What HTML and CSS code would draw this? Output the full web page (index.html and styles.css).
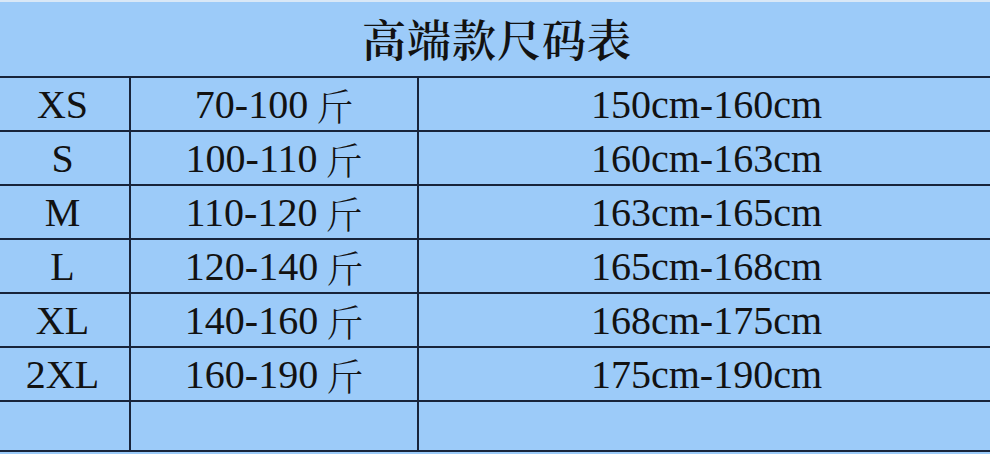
FILE: index.html
```html
<!DOCTYPE html>
<html lang="zh-CN">
<head>
<meta charset="utf-8">
<title>高端款尺码表</title>
<link rel="stylesheet" href="styles.css">
</head>
<body>
<div class="page">
  <div class="strip"></div>
  <h1 class="title">高端款尺码表</h1>
  <div class="grid">
    <div class="cell c1">XS</div><div class="cell c2">70-100 <span class="cjk">斤</span></div><div class="cell c3">150cm-160cm</div>
    <div class="cell c1">S</div><div class="cell c2">100-110 <span class="cjk">斤</span></div><div class="cell c3">160cm-163cm</div>
    <div class="cell c1">M</div><div class="cell c2">110-120 <span class="cjk">斤</span></div><div class="cell c3">163cm-165cm</div>
    <div class="cell c1">L</div><div class="cell c2">120-140 <span class="cjk">斤</span></div><div class="cell c3">165cm-168cm</div>
    <div class="cell c1">XL</div><div class="cell c2">140-160 <span class="cjk">斤</span></div><div class="cell c3">168cm-175cm</div>
    <div class="cell c1">2XL</div><div class="cell c2">160-190 <span class="cjk">斤</span></div><div class="cell c3">175cm-190cm</div>
    <div class="cell c1"></div><div class="cell c2"></div><div class="cell c3"></div>
  </div>
</div>
</body>
</html>
```
FILE: styles.css
```css
html, body {
  margin: 0;
  padding: 0;
}
body {
  width: 990px;
  height: 454px;
  overflow: hidden;
  background: #9ccbf9;
  font-family: "Liberation Serif", "Noto Serif CJK SC", "Noto Sans CJK SC", serif;
  color: #121212;
}
.page {
  display: flex;
  flex-direction: column;
}
.strip {
  height: 2px;
  background: #d9e8f7;
}
.title {
  margin: 0;
  height: 74px;
  display: flex;
  align-items: center;
  justify-content: center;
  font-family: "Noto Serif CJK SC", "Noto Sans CJK SC", serif;
  font-weight: 600;
  font-size: 44px;
  letter-spacing: 1px;
  padding-left: 4px;
  padding-bottom: 2px;
  box-sizing: border-box;
}
.grid {
  display: grid;
  grid-template-columns: 129px 288px 1fr;
  grid-template-rows: repeat(6, 54px) 50px;
  border-bottom: 2px solid #18243a;
}
.cell {
  border-top: 2px solid #18243a;
  display: flex;
  align-items: center;
  justify-content: center;
  font-size: 40px;
  line-height: 1;
  padding-top: 2px;
  box-sizing: border-box;
}
.c2, .c3 {
  border-left: 2px solid #18243a;
}
.c1 {
  padding-right: 4px;
}
.c3 {
  padding-left: 4px;
}
.cjk {
  font-family: "Noto Serif CJK SC", "Noto Sans CJK SC", serif;
  font-weight: 300;
  font-size: 37px;
  margin-left: 8px;
}
```
